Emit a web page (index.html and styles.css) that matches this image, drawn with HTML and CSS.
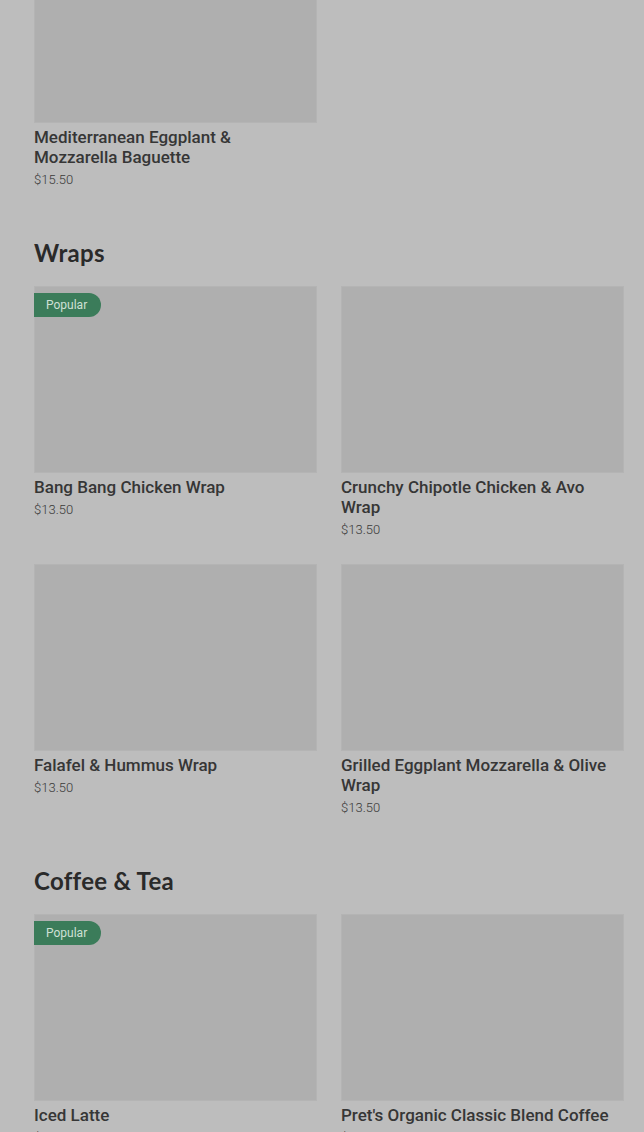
FILE: index.html
```html
<!DOCTYPE html>
<html lang="en">
<head>
  <meta charset="UTF-8">
  <meta name="viewport" content="width=device-width, initial-scale=1.0">
  <title>Menu</title>
  <link rel="stylesheet" href="styles.css">
</head>
<body>
  <main class="menu">
    <!-- Baguettes (scrolled past) -->
    <section class="category">
      <div class="grid">
        <div class="item">
          <div class="item-image"></div>
          <div class="item-name">Mediterranean Eggplant &amp; Mozzarella Baguette</div>
          <div class="item-price">$15.50</div>
        </div>
      </div>
    </section>

    <section class="category">
      <h2 class="category-title">Wraps</h2>
      <div class="grid">
        <div class="item">
          <div class="item-image"><span class="badge">Popular</span></div>
          <div class="item-name">Bang Bang Chicken Wrap</div>
          <div class="item-price">$13.50</div>
        </div>
        <div class="item">
          <div class="item-image"></div>
          <div class="item-name">Crunchy Chipotle Chicken &amp; Avo Wrap</div>
          <div class="item-price">$13.50</div>
        </div>
        <div class="item">
          <div class="item-image"></div>
          <div class="item-name">Falafel &amp; Hummus Wrap</div>
          <div class="item-price">$13.50</div>
        </div>
        <div class="item">
          <div class="item-image"></div>
          <div class="item-name">Grilled Eggplant Mozzarella &amp; Olive Wrap</div>
          <div class="item-price">$13.50</div>
        </div>
      </div>
    </section>

    <section class="category">
      <h2 class="category-title">Coffee &amp; Tea</h2>
      <div class="grid">
        <div class="item">
          <div class="item-image"><span class="badge">Popular</span></div>
          <div class="item-name">Iced Latte</div>
          <div class="item-price">$6.50</div>
        </div>
        <div class="item">
          <div class="item-image"></div>
          <div class="item-name">Pret's Organic Classic Blend Coffee</div>
          <div class="item-price">$4.90</div>
        </div>
      </div>
    </section>
  </main>
</body>
</html>
```

FILE: styles.css
```css
* {
  margin: 0;
  padding: 0;
  box-sizing: border-box;
}

body {
  background-color: #bdbdbd;
  overflow: hidden;
  height: 100vh;
  font-family: Roboto, "Liberation Sans", sans-serif;
  color: #363636;
}

/* page is scrolled: first card image is cut at the top */
.menu {
  margin-top: -64px;
  padding: 0 20px 0 34px;
}

.category + .category {
  margin-top: 47px;
}

.category-title {
  font-family: Lato, "Liberation Sans", sans-serif;
  font-size: 24px;
  font-weight: 700;
  letter-spacing: 0.3px;
  line-height: 32px;
  color: #2a2a2a;
  margin-bottom: 17px;
}

.grid {
  display: grid;
  grid-template-columns: 1fr 1fr;
  column-gap: 24px;
  row-gap: 24px;
}

.item-image {
  position: relative;
  height: 187px;
  background-color: #afafaf;
  border: 1px solid #b4b4b4;
}

.badge {
  position: absolute;
  top: 6px;
  left: -1px;
  height: 24px;
  padding: 0 14px 0 12px;
  line-height: 24px;
  font-size: 12px;
  color: #cfe0d6;
  background-color: #3b7c5a;
  border-radius: 0 12px 12px 0;
}

.item-name {
  margin-top: 4px;
  font-size: 17px;
  font-weight: 500;
  line-height: 20px;
  color: #363636;
}

.item-price {
  margin-top: 3px;
  font-size: 13px;
  font-weight: 300;
  line-height: 20px;
  color: #3a3a3a;
}
```
